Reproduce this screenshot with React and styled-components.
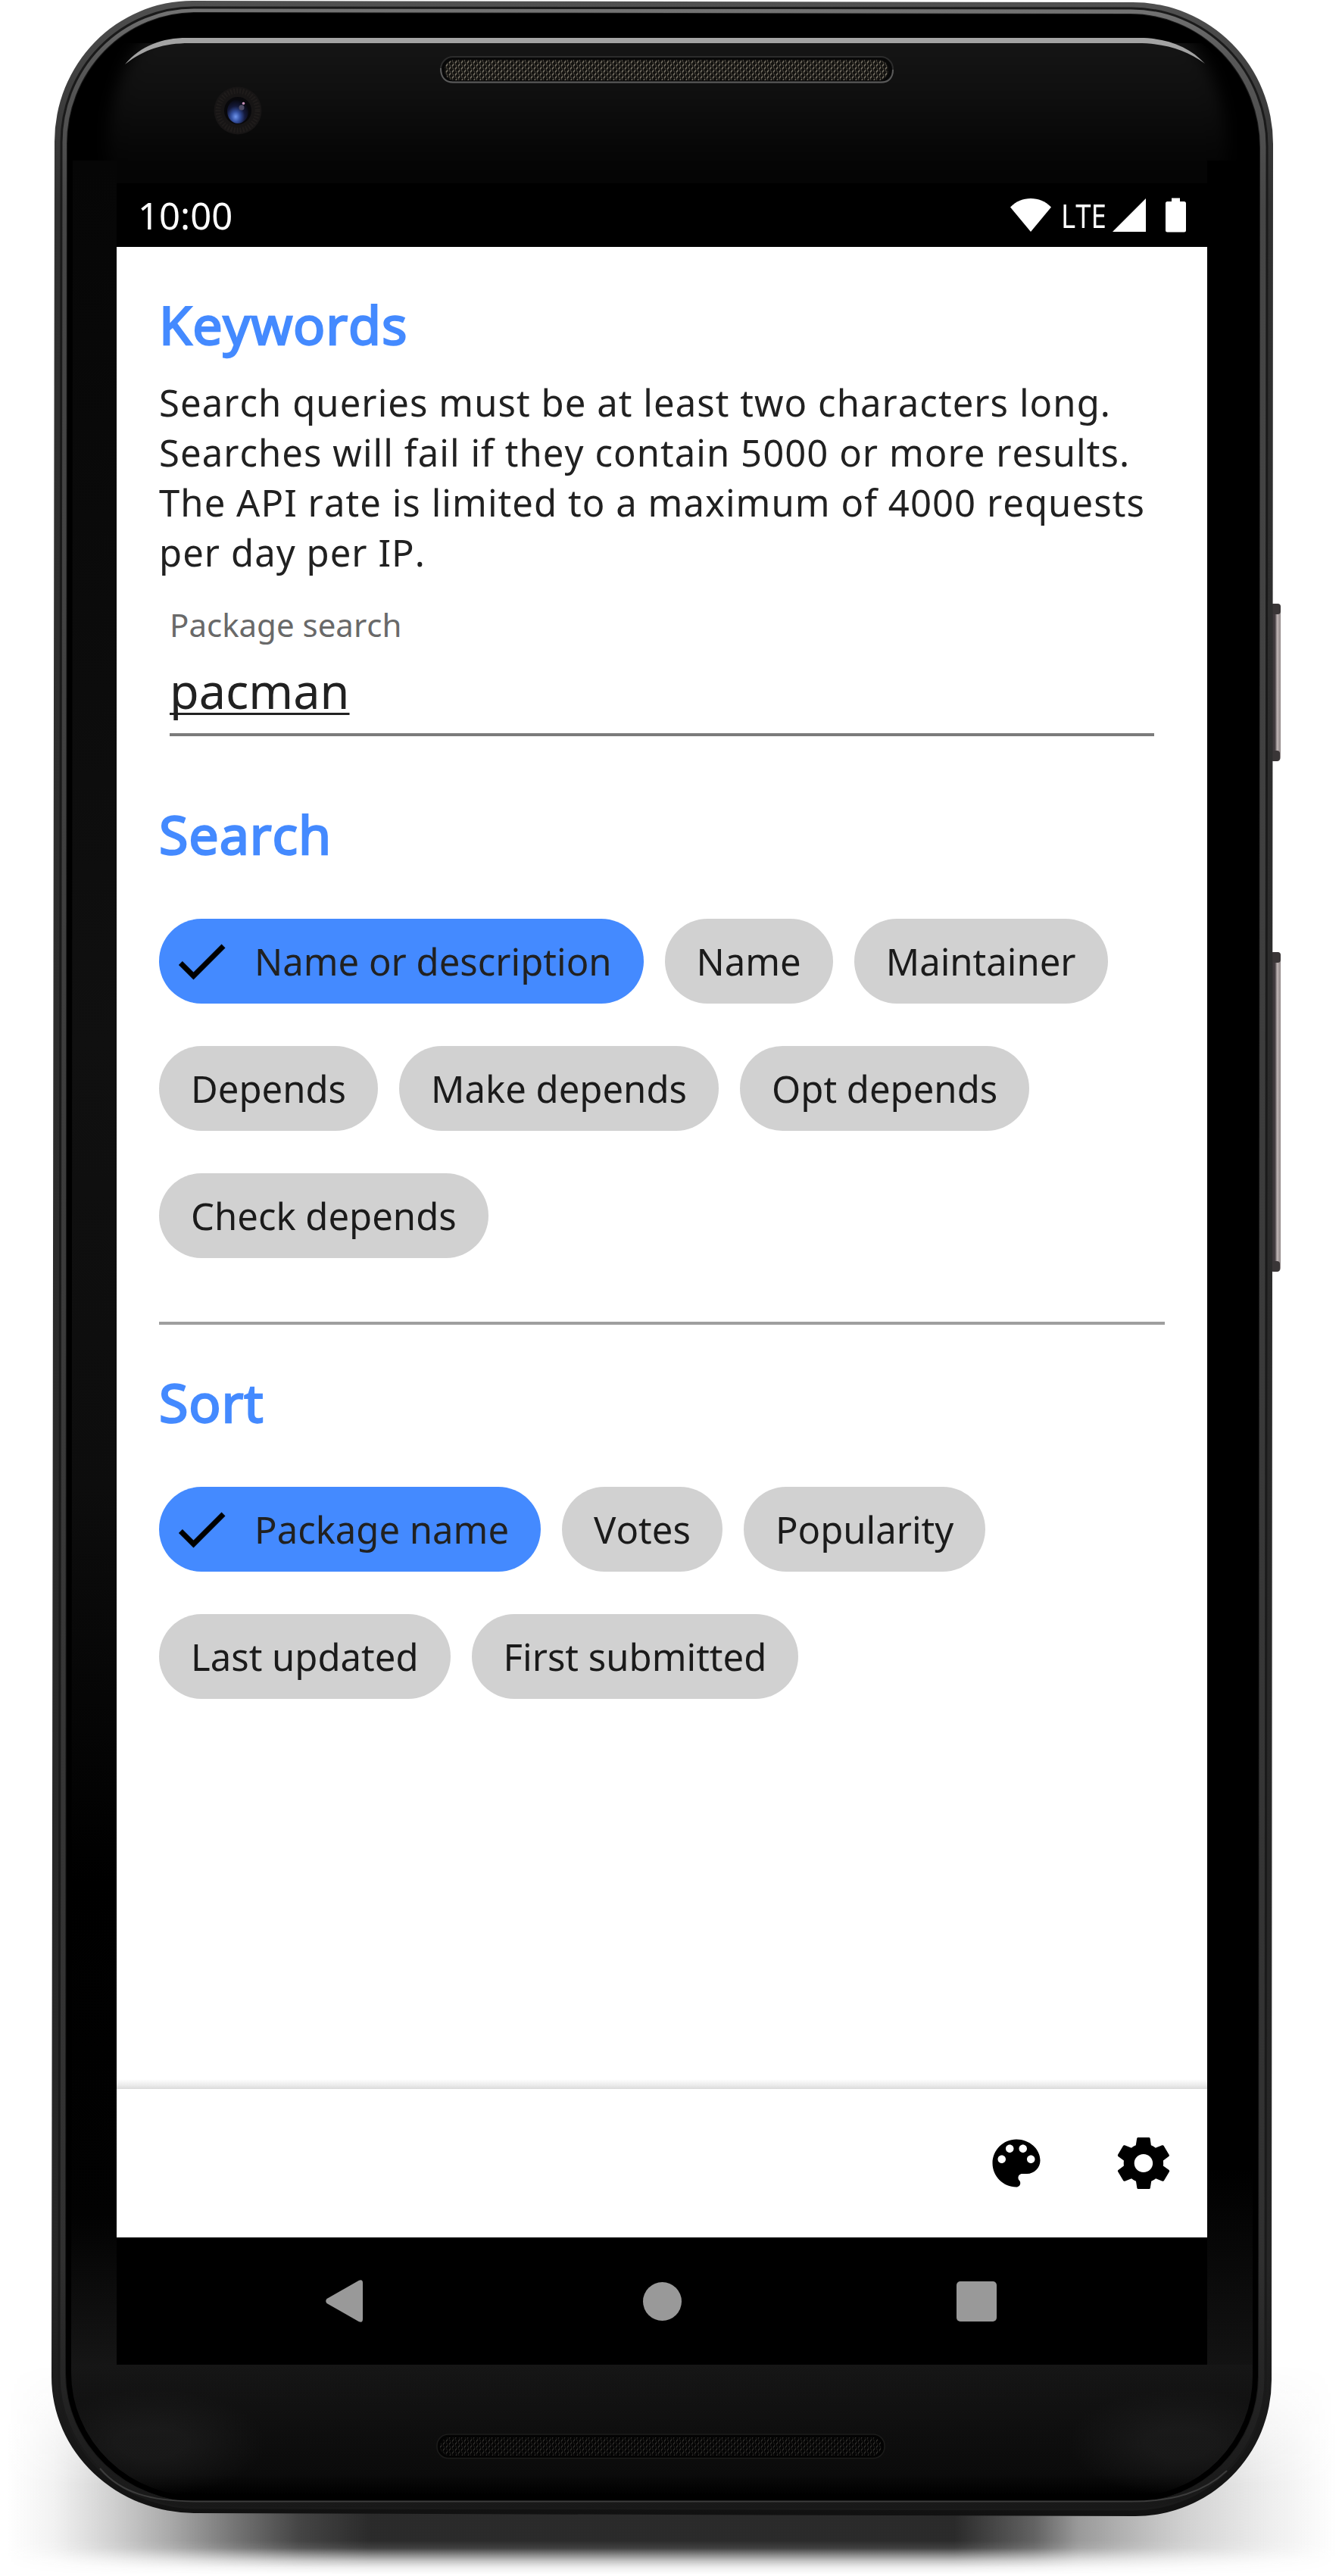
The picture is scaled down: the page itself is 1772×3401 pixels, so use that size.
import React from 'react';
import styled, { createGlobalStyle } from 'styled-components';
import { IoMdColorPalette, IoMdSettings } from 'react-icons/io';

const GlobalStyle = createGlobalStyle`
  *, *::before, *::after { box-sizing: border-box; }
  body {
    margin: 0;
    background: #fff;
    font-family: 'Noto Sans', 'Open Sans', sans-serif;
    font-kerning: none;
  }
`;

const Page = styled.div`
  position: relative;
  width: 1772px;
  height: 3401px;
  padding: 242px 0 0 154px;
  overflow: hidden;
  background: #fff;
`;

const FloorShadow = styled.div`
  position: absolute;
  left: 0;
  right: 0;
  bottom: 0;
  height: 301px;
  background: linear-gradient(90deg,
    rgba(38, 38, 38, 0) 8px, rgba(38, 38, 38, 0.06) 70px, rgba(38, 38, 38, 0.22) 150px,
    rgba(38, 38, 38, 0.4) 226px, rgba(38, 38, 38, 0.64) 310px, rgba(38, 38, 38, 0.86) 395px,
    rgba(38, 38, 38, 0.98) 490px, rgba(38, 38, 38, 0.98) 1260px,
    rgba(38, 38, 38, 0.72) 1366px, rgba(38, 38, 38, 0.47) 1423px, rgba(38, 38, 38, 0.31) 1507px,
    rgba(38, 38, 38, 0.21) 1564px, rgba(38, 38, 38, 0.08) 1677px, rgba(38, 38, 38, 0) 1765px);
  mask-image: linear-gradient(180deg, transparent 20px, #000 180px, #000 254px,
    rgba(0, 0, 0, 0.9) 264px, rgba(0, 0, 0, 0.6) 272px, rgba(0, 0, 0, 0.28) 281px,
    rgba(0, 0, 0, 0.08) 290px, transparent 299px);
`;

const Chassis = styled.svg`
  position: absolute;
  left: 0;
  top: 0;
`;

const Screen = styled.div`
  position: relative;
  display: flex;
  flex-direction: column;
  width: 1440px;
  height: 2880px;
  background: #fff;
`;

const StatusBar = styled.header`
  display: flex;
  align-items: center;
  justify-content: space-between;
  height: 84px;
  padding: 0 28px;
  background: #000;
  color: #fff;
`;

const Clock = styled.span`
  font-size: 49px;
  line-height: 84px;
`;

const StatusIcons = styled.div`
  display: flex;
  align-items: center;
  height: 84px;
`;

const NetworkType = styled.span`
  width: 64px;
  margin: 0 4px 0 13px;
  font-size: 43.5px;
  line-height: 80px;
  transform: scaleX(0.84);
  transform-origin: left center;
`;

const Battery = styled.svg`
  margin-left: 26px;
`;

const Content = styled.main`
  flex: 1;
  padding: 55px 56px 0;
`;

const Heading = styled.h2`
  margin: 0;
  color: #448aff;
  font-size: 70px;
  font-weight: 400;
  line-height: 95px;
  letter-spacing: 0.0125em;
  -webkit-text-stroke: 2.4px #448aff;
`;

const Hint = styled.p`
  margin: 22px -20px 0 0;
  color: #212121;
  font-size: 49px;
  line-height: 66px;
  letter-spacing: 1.05px;
`;

const Field = styled.label`
  display: flex;
  flex-direction: column;
  margin: 34px 14px 82px;
  border-bottom: 4px solid #7b7b7b;
`;

const FieldLabel = styled.span`
  color: #696969;
  font-size: 42px;
  line-height: 57px;
`;

const FieldValue = styled.span`
  margin: 16px 0 13px;
  color: #212121;
  font-size: 63px;
  line-height: 86px;
  text-decoration: underline;
  text-decoration-thickness: 3px;
  text-underline-offset: 5px;
  text-decoration-skip-ink: none;
`;

const Chips = styled.div`
  display: flex;
  flex-wrap: wrap;
  gap: 56px 28px;
  margin-top: 64px;
`;

const ChipBox = styled.button`
  display: flex;
  align-items: center;
  height: 112px;
  padding: 0 42px 0 ${(p) => (p.$selected ? 14 : 42)}px;
  gap: 28px;
  border: 0;
  border-radius: 56px;
  background: ${(p) => (p.$selected ? '#448aff' : '#d1d1d1')};
  color: ${(p) => (p.$selected ? '#212121' : '#1b1b1b')};
  font-family: inherit;
  font-size: 49px;
  line-height: 66px;
  font-kerning: none;
  white-space: nowrap;
`;

const Divider = styled.hr`
  height: 4px;
  margin: 84px 0 55px;
  border: 0;
  background: #9e9e9e;
`;

const Toolbar = styled.footer`
  position: relative;
  display: flex;
  align-items: center;
  justify-content: flex-end;
  gap: 84px;
  height: 196px;
  padding-right: 42px;
  background: #fff;

  &::before {
    content: '';
    position: absolute;
    left: 0;
    right: 0;
    bottom: 100%;
    height: 13px;
    background: linear-gradient(180deg, #fff, #ececec 60%, #dadada);
  }
`;

const NavBar = styled.nav`
  display: grid;
  grid-template-columns: 281px 462px 416px 1fr;
  align-items: center;
  height: 168px;
  background: #000;
`;

const NavSlot = styled.span`
  display: flex;
  justify-content: flex-end;
`;

const HomeDot = styled.span`
  width: 51px;
  height: 51px;
  margin-right: -3px;
  border-radius: 50%;
  background: #999;
`;

const RecentsSquare = styled.span`
  width: 53px;
  height: 53px;
  margin-right: -3px;
  border-radius: 5px;
  background: #999;
`;

const BackShape = styled.svg`
  margin-right: -44px;
`;

const OUTER =
  'M254 1 L1496 3 A185 187 0 0 1 1681 190 L1679 3142 A180 180 0 0 1 1499 3322 L258 3318 A190 180 0 0 1 68 3138 L72 187 A182 186 0 0 1 254 1 Z';
const MIDDLE =
  'M256 10 L1494 11 A179 182 0 0 1 1673 193 L1671 3140 A174 173 0 0 1 1497 3313 L262 3311 A182 174 0 0 1 78 3137 L81 188 A175 178 0 0 1 256 10 Z';
const INNER =
  'M258 17 L1492 19 A171 176 0 0 1 1663 195 L1661 3137 A166 166 0 0 1 1495 3303 L264 3303 A176 170 0 0 1 87 3133 L89 190 A169 173 0 0 1 258 17 Z';

function Phone() {
  return (
    <Chassis width="1772" height="3401" viewBox="0 0 1772 3401" aria-hidden="true">
      <defs>
        <linearGradient id="rim" x1="0" y1="0" x2="0" y2="1">
          <stop offset="0" stopColor="#505050" />
          <stop offset="0.03" stopColor="#404040" />
          <stop offset="0.08" stopColor="#303030" />
          <stop offset="0.9" stopColor="#262626" />
          <stop offset="1" stopColor="#111" />
        </linearGradient>
        <linearGradient id="rimLight" x1="0" y1="0" x2="0" y2="1">
          <stop offset="0" stopColor="#747474" />
          <stop offset="0.02" stopColor="#585858" />
          <stop offset="0.08" stopColor="#464646" />
          <stop offset="0.9" stopColor="#303030" />
          <stop offset="1" stopColor="#181818" />
        </linearGradient>
        <linearGradient id="forehead" gradientUnits="userSpaceOnUse" x1="0" y1="57" x2="0" y2="212">
          <stop offset="0" stopColor="#151515" />
          <stop offset="0.5" stopColor="#0e0e0e" />
          <stop offset="1" stopColor="#050505" />
        </linearGradient>
        <linearGradient id="chin" x1="0" y1="0" x2="0" y2="1">
          <stop offset="0" stopColor="#161616" />
          <stop offset="0.5" stopColor="#0e0e0e" />
          <stop offset="0.8" stopColor="#0b0b0b" />
          <stop offset="0.95" stopColor="#000" />
        </linearGradient>
        <linearGradient id="leftBezel" x1="0" y1="0" x2="0" y2="1">
          <stop offset="0" stopColor="#060606" />
          <stop offset="0.4" stopColor="#101010" />
          <stop offset="0.6" stopColor="#0d0d0d" />
          <stop offset="0.78" stopColor="#000" />
          <stop offset="0.93" stopColor="#020202" />
          <stop offset="1" stopColor="#161616" />
        </linearGradient>
        <linearGradient id="rightBezel" x1="0" y1="0" x2="0" y2="1">
          <stop offset="0.91" stopColor="#000" />
          <stop offset="1" stopColor="#131313" />
        </linearGradient>
        <linearGradient id="button" x1="0" y1="0" x2="1" y2="0">
          <stop offset="0" stopColor="#2b2729" />
          <stop offset="0.5" stopColor="#453f42" />
          <stop offset="0.7" stopColor="#bdb3b3" />
          <stop offset="1" stopColor="#8f8787" />
        </linearGradient>
        <radialGradient id="cornerGlow">
          <stop offset="0.3" stopColor="#222" stopOpacity="0.55" />
          <stop offset="1" stopColor="#222" stopOpacity="0" />
        </radialGradient>
        <radialGradient id="lens" cx="0.4" cy="0.72" r="0.7">
          <stop offset="0" stopColor="#6f95ee" />
          <stop offset="0.3" stopColor="#34509f" />
          <stop offset="0.62" stopColor="#14193a" />
          <stop offset="1" stopColor="#08080e" />
        </radialGradient>
        <pattern id="mesh" width="8" height="8" patternUnits="userSpaceOnUse">
          <rect width="8" height="8" fill="#12110f" />
          <path d="M1 3.5 L3 0.5 M5 7.5 L7 4.5" stroke="#7b7568" strokeWidth="1.5" />
          <path d="M5 0.5 L7 3.5 M1 4.5 L3 7.5" stroke="#48443c" strokeWidth="1.3" />
        </pattern>
        <pattern id="meshDim" width="8" height="8" patternUnits="userSpaceOnUse">
          <rect width="8" height="8" fill="#040404" />
          <path d="M1 3.5 L3 0.5 M5 7.5 L7 4.5" stroke="#3b3935" strokeWidth="1.2" />
          <path d="M5 0.5 L7 3.5 M1 4.5 L3 7.5" stroke="#1d1c1a" strokeWidth="1.2" />
        </pattern>
        <filter id="soft" x="-10%" y="-30%" width="120%" height="160%" colorInterpolationFilters="sRGB">
          <feGaussianBlur stdDeviation="10" />
        </filter>
        <clipPath id="face"><path d={INNER} /></clipPath>
        <clipPath id="foreheadArea"><rect x="100" y="57" width="1560" height="155" /></clipPath>
      </defs>

      <rect x="1676" y="797" width="15" height="208" rx="5" fill="url(#button)" />
      <rect x="1680" y="797" width="11" height="14" rx="4" fill="#3a3637" />
      <rect x="1680" y="991" width="10" height="14" rx="4" fill="#3a3637" />
      <rect x="1676" y="1257" width="15" height="422" rx="5" fill="url(#button)" />
      <rect x="1680" y="1257" width="11" height="14" rx="4" fill="#3a3637" />
      <rect x="1680" y="1665" width="10" height="14" rx="4" fill="#3a3637" />

      <path d={OUTER} fill="url(#rim)" />
      <path d={MIDDLE} fill="url(#rimLight)" stroke="#1a1a1a" strokeWidth="3" />
      <path d={INNER} fill="#000" stroke="#181818" strokeWidth="2" />

      <g clipPath="url(#face)">
        <rect x="88" y="212" width="66" height="2915" fill="url(#leftBezel)" />
        <rect x="154" y="212" width="1440" height="30" fill="#050505" />
        <rect x="1594" y="212" width="69" height="2915" fill="url(#rightBezel)" />
        <g clipPath="url(#foreheadArea)">
          <path
            d="M142 280 V190 C146 110 180 25 255 25 H1500 C1580 25 1616 110 1620 190 V280 Z"
            fill="url(#forehead)"
            filter="url(#soft)"
          />
        </g>
        <rect x="88" y="3122" width="1575" height="181" fill="url(#chin)" />
        <ellipse cx="200" cy="3225" rx="150" ry="70" fill="url(#cornerGlow)" />
        <ellipse cx="1560" cy="3225" rx="150" ry="70" fill="url(#cornerGlow)" />
        <path d={INNER} fill="none" stroke="#000" strokeWidth="14" />
      </g>

      <path
        d="M165 85 C186 60 214 50 247 50 H1505 C1541 50 1571 62 1591 84 C1567 66 1538 57 1502 57 H250 C217 57 190 65 165 85 Z"
        fill="#a3a3a3"
      />
      <path
        d="M132 3259 C160 3292 200 3302.500 262 3302.500 H1495 C1550 3302.500 1590 3290 1620 3262"
        fill="none" stroke="#3c3c3c" strokeWidth="2"
      />

      <circle cx="314" cy="146" r="31.500" fill="#171515" />
      <circle cx="314" cy="146" r="26" fill="none" stroke="#1f1c1b" strokeWidth="7" strokeDasharray="2 2" />
      <circle cx="314" cy="146" r="18" fill="#08080b" />
      <ellipse cx="314" cy="147" rx="14" ry="16" fill="url(#lens)" />
      <circle cx="319" cy="142" r="3.500" fill="#4c4a63" />
      <circle cx="321.500" cy="136.500" r="1.800" fill="#c58fb5" />

      <rect x="582" y="75" width="597" height="34" rx="16" fill="#080808" stroke="#2c2c2c" strokeWidth="2" />
      <path
        d="M582 90 C582 102 588 108.500 598 108.500 H1164 C1174 108.500 1179 102 1179 92"
        fill="none" stroke="#5a5a5a" strokeWidth="2"
      />
      <rect x="587" y="79" width="586" height="27" rx="13" fill="url(#mesh)" />
      <rect x="577" y="3214" width="591" height="31.500" rx="15" fill="#030303" stroke="#1c1c1b" strokeWidth="1.500" />
      <rect x="581" y="3218" width="583" height="24" rx="12" fill="url(#meshDim)" />
    </Chassis>
  );
}

function CheckIcon() {
  return (
    <svg width="84" height="84" viewBox="0 0 24 24" fill="#000" aria-hidden="true">
      <path d="M9 16.170 4.830 12l-1.420 1.410L9 19 21 7l-1.410-1.410z" />
    </svg>
  );
}

function Chip({ label, selected }) {
  return (
    <ChipBox type="button" $selected={selected}>
      {selected && <CheckIcon />}
      <span>{label}</span>
    </ChipBox>
  );
}

function ChipGroup({ options, value }) {
  return (
    <Chips>
      {options.map((o) => (
        <Chip key={o} label={o} selected={o === value} />
      ))}
    </Chips>
  );
}

const SEARCH_BY = [
  'Name or description',
  'Name',
  'Maintainer',
  'Depends',
  'Make depends',
  'Opt depends',
  'Check depends',
];
const SORT_BY = ['Package name', 'Votes', 'Popularity', 'Last updated', 'First submitted'];

export default function App() {
  return (
    <Page>
      <GlobalStyle />
      <FloorShadow />
      <Phone />
      <Screen>
        <StatusBar>
          <Clock>10:00</Clock>
          <StatusIcons>
            <svg width="54" height="46" viewBox="0 0 54 46" fill="#fff" aria-hidden="true">
              <path d="M0 12.500 C8 4.500 17 1 27 1 C37 1 46 4.500 54 12.500 L27 45 Z" />
            </svg>
            <NetworkType>LTE</NetworkType>
            <svg width="44" height="46" viewBox="0 0 44 46" fill="#fff" aria-hidden="true">
              <path d="M44 1 V45 H0 Z" />
            </svg>
            <Battery width="27" height="46" viewBox="0 0 27 46" fill="#fff" aria-hidden="true">
              <path d="M8 0.500 H19 V5 H24.500 Q27 5 27 7.500 V43 Q27 45.500 24.500 45.500 H2.500 Q0 45.500 0 43 V7.500 Q0 5 2.500 5 H8 Z" />
            </Battery>
          </StatusIcons>
        </StatusBar>
        <Content>
          <Heading>Keywords</Heading>
          <Hint>
            Search queries must be at least two characters long.
            <br />
            Searches will fail if they contain 5000 or more results.
            <br />
            The API rate is limited to a maximum of 4000 requests
            <br />
            per day per IP.
          </Hint>
          <Field>
            <FieldLabel>Package search</FieldLabel>
            <FieldValue>pacman</FieldValue>
          </Field>
          <Heading>Search</Heading>
          <ChipGroup options={SEARCH_BY} value="Name or description" />
          <Divider />
          <Heading>Sort</Heading>
          <ChipGroup options={SORT_BY} value="Package name" />
        </Content>
        <Toolbar>
          <IoMdColorPalette size={84} color="#000" />
          <IoMdSettings size={84} color="#000" />
        </Toolbar>
        <NavBar>
          <NavSlot>
            <BackShape width="49" height="56" viewBox="0 0 49 56" fill="#999" aria-hidden="true">
              <path d="M1.500 25 L44 0.800 Q49 -1 49 4 V52 Q49 57 44 55.200 L1.500 31 Q-1 28 1.500 25 Z" />
            </BackShape>
          </NavSlot>
          <NavSlot><HomeDot /></NavSlot>
          <NavSlot><RecentsSquare /></NavSlot>
        </NavBar>
      </Screen>
    </Page>
  );
}
